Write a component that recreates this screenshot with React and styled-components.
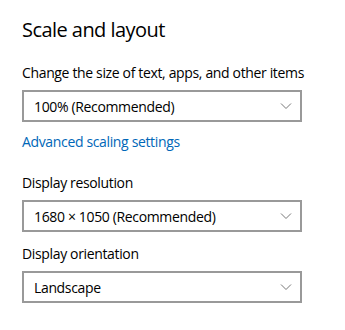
import React from 'react'
import styled, { createGlobalStyle } from 'styled-components'

const GlobalStyle = createGlobalStyle`
  body {
    margin: 0;
    background: #ffffff;
    font-family: "Open Sans", "Noto Sans", sans-serif;
    color: #000000;
  }
`

const Page = styled.div`
  width: 345px;
  height: 330px;
  padding: 16px 0 0 22px;
  box-sizing: border-box;
`

const Title = styled.h2`
  margin: 0 0 19px 0;
  font-size: 20px;
  line-height: 28px;
  font-weight: 400;
  letter-spacing: -0.55px;
`

const Label = styled.div`
  font-size: 14px;
  line-height: 20px;
  letter-spacing: -0.35px;
  margin-top: ${p => p.$top || 0}px;
  margin-bottom: 7px;
`

const Select = styled.div`
  width: 280px;
  height: 32px;
  box-sizing: border-box;
  border: 2px solid #999999;
  display: flex;
  align-items: center;
  justify-content: space-between;
  padding: 0 8px 0 10px;
  font-size: 14px;
  letter-spacing: -0.35px;
`

const Link = styled.a`
  display: block;
  margin-top: 10px;
  font-size: 14px;
  line-height: 20px;
  letter-spacing: -0.35px;
  color: #0067b8;
  text-decoration: none;
`

const Chevron = () => (
  <svg width="12" height="8" viewBox="0 0 12 8">
    <path d="M1 1.5 L6 6.5 L11 1.5" fill="none" stroke="#777" strokeWidth="1" />
  </svg>
)

const Dropdown = ({ value }) => (
  <Select>
    <span>{value}</span>
    <Chevron />
  </Select>
)

export default function App() {
  return (
    <Page>
      <GlobalStyle />
      <Title>Scale and layout</Title>
      <Label>Change the size of text, apps, and other items</Label>
      <Dropdown value="100% (Recommended)" />
      <Link href="#">Advanced scaling settings</Link>
      <Label $top={21}>Display resolution</Label>
      <Dropdown value="1680 × 1050 (Recommended)" />
      <Label $top={12}>Display orientation</Label>
      <Dropdown value="Landscape" />
    </Page>
  )
}
